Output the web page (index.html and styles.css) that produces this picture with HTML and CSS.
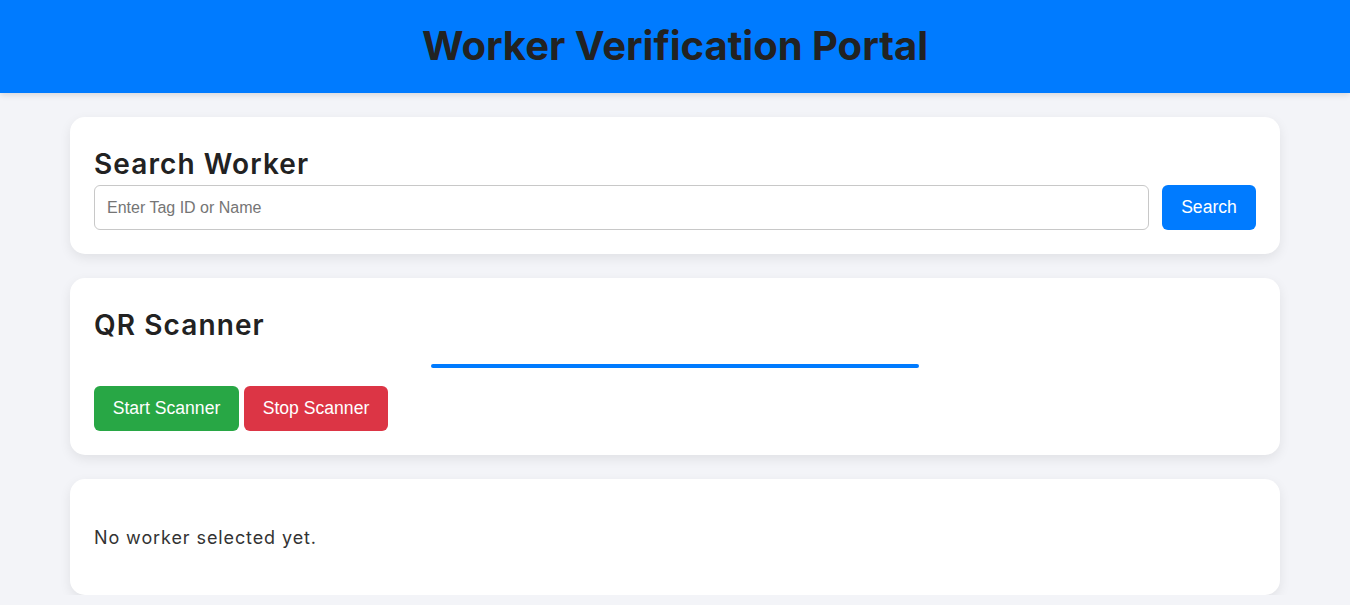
FILE: index.html
```html
<!DOCTYPE html>
<html lang="en">
<head>
<meta charset="utf-8">
<title>Worker Verification Portal</title>
<link rel="stylesheet" href="styles.css">
</head>
<body>
<header class="topbar">
  <h1 class="title">Worker Verification Portal</h1>
</header>
<main class="content">
  <section class="card">
    <h2 class="card-title">Search Worker</h2>
    <div class="search-row">
      <input class="search-input" type="text" placeholder="Enter Tag ID or Name">
      <button class="btn btn-blue">Search</button>
    </div>
  </section>
  <section class="card">
    <h2 class="card-title">QR Scanner</h2>
    <div class="reader"></div>
    <div class="btn-row">
      <button class="btn btn-green">Start Scanner</button>
      <button class="btn btn-red">Stop Scanner</button>
    </div>
  </section>
  <section class="card card-info">
    <p class="empty">No worker selected yet.</p>
  </section>
</main>
</body>
</html>
```
FILE: styles.css
```css
* { box-sizing: border-box; }
html, body { margin: 0; padding: 0; }
body {
  background: #f3f4f8;
  font-family: "Inter", "Liberation Sans", sans-serif;
  color: #222;
}
.topbar {
  height: 93px;
  background: #007bff;
  display: flex;
  align-items: center;
  justify-content: center;
  box-shadow: 0 2px 6px rgba(0,0,0,0.12);
}
.title {
  margin: 0;
  font-size: 40px;
  font-weight: 700;
  color: #222;
  line-height: 1;
  padding-bottom: 2px;
}
.content {
  max-width: 1210px;
  margin: 24px auto 0;
  display: flex;
  flex-direction: column;
  gap: 24px;
}
.card {
  background: #fff;
  border-radius: 15px;
  padding: 24px;
  box-shadow: 0 4px 12px rgba(0,0,0,0.08);
}
.card-title {
  margin: 0;
  height: 44px;
  display: flex;
  align-items: center;
  font-size: 28px;
  font-weight: 600;
  letter-spacing: 1.1px;
  color: #222;
  padding-top: 1px;
}
.search-row {
  display: flex;
  gap: 13px;
}
.search-input {
  flex: 1;
  height: 45px;
  border: 1px solid #c8c8c8;
  border-radius: 6px;
  padding: 0 12px;
  font-family: "Liberation Sans", Arial, sans-serif;
  font-size: 16px;
  color: #222;
  outline: none;
}
.search-input::placeholder { color: #757575; }
.btn {
  border: none;
  border-radius: 6px;
  color: #fff;
  font-family: "Liberation Sans", Arial, sans-serif;
  font-size: 17.6px;
  height: 45px;
  padding: 0;
  cursor: pointer;
}
.btn-blue { background: #007bff; width: 94px; }
.btn-green { background: #28a745; width: 145px; }
.btn-red { background: #dc3545; width: 144px; }
.reader {
  width: 488px;
  height: 4px;
  margin: 18px auto 18px;
  background: #007bff;
  border-radius: 2px;
}
.btn-row {
  display: flex;
  gap: 5px;
}
.card-info {
  height: 116px;
  display: flex;
  align-items: center;
}
.empty {
  margin: 0;
  font-size: 18px;
  letter-spacing: 0.9px;
  color: #333;
}
```
